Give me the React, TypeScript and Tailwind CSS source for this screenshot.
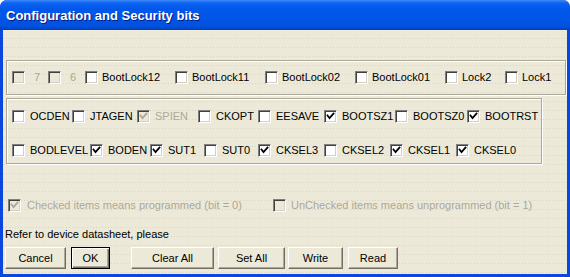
import React from "react";

type CB = { label: string; w?: number; checked?: boolean; disabled?: boolean; gap?: number };

function Check({ color }: { color: string }) {
  return (
    <svg width="9" height="9" viewBox="0 0 9 9" className="block">
      <path d="M1.5 3.5 L3.5 6 L7.5 1.5" fill="none" stroke={color} strokeWidth="1.8" strokeLinecap="square" />
    </svg>
  );
}

function Box({ checked, disabled }: { checked?: boolean; disabled?: boolean }) {
  return (
    <div
      className={
        "w-[13px] h-[13px] shrink-0 flex items-center justify-center border border-t-[#808080] border-l-[#808080] border-b-white border-r-white shadow-[inset_1px_1px_0_#404040,inset_-1px_-1px_0_#D4D0C8] " +
        (disabled ? "bg-[#ECE9D8]" : "bg-white")
      }
    >
      {checked && <Check color={disabled ? "#ACA899" : "#000"} />}
    </div>
  );
}

function CheckItem({ label, w, checked, disabled, gap = 5 }: CB) {
  return (
    <div className="flex items-center shrink-0" style={w ? { width: w } : undefined}>
      <Box checked={checked} disabled={disabled} />
      <span
        className={"leading-[13px] whitespace-nowrap " + (disabled ? "text-[#ACA899]" : "text-black")}
        style={{ marginLeft: gap }}
      >
        {label}
      </span>
    </div>
  );
}

function Btn({ label, w, ml, def }: { label: string; w: number; ml: number; def?: boolean }) {
  return (
    <div
      className={
        "h-[22px] flex items-center justify-center bg-[#ECE9D8] text-black " +
        (def
          ? "border border-black shadow-[inset_1px_1px_0_#fff,inset_-1px_-1px_0_#716F64,inset_-2px_-2px_0_#ACA899]"
          : "border border-t-white border-l-white border-b-[#716F64] border-r-[#716F64] shadow-[inset_-1px_-1px_0_#ACA899]")
      }
      style={{ width: w, marginLeft: ml }}
    >
      {label}
    </div>
  );
}

const etched = "border border-[#ACA899] shadow-[inset_1px_1px_0_#fff,1px_1px_0_#fff]";

export default function App() {
  return (
    <div
      className="w-[570px] h-[277px] flex flex-col bg-[#0B46DD] rounded-t-[7px] overflow-hidden text-[11px]"
      style={{ fontFamily: '"Liberation Sans", Arial, sans-serif' }}
    >
      <div className="h-[30px] shrink-0 flex items-center pl-[6px] bg-[linear-gradient(to_bottom,#3D8BF8_0px,#0E63F2_3px,#0058EA_9px,#0055E5_20px,#0052DE_26px,#0040C0_30px)]">
        <span className="text-white font-bold text-[13px] [text-shadow:1px_1px_0_#0A1883] leading-none pt-[1px]">
          Configuration and Security bits
        </span>
      </div>
      <div className="flex-1 mx-[3px] mb-[3px] flex flex-col bg-[#ECE9D8] bg-[linear-gradient(#ECE9D8_8px,transparent_8px),linear-gradient(90deg,#D9D5C6_1px,#ECE9D8_1px)] bg-[size:3px_9px] pt-[30px]">
        <div className={"ml-[3px] mr-[1px] h-[35px] flex items-center pl-[5px] " + etched}>
          <CheckItem label="7" w={36} disabled gap={9} />
          <CheckItem label="6" w={37} disabled gap={9} />
          <CheckItem label="BootLock12" w={90} gap={4} />
          <CheckItem label="BootLock11" w={90} gap={4} />
          <CheckItem label="BootLock02" w={90} gap={4} />
          <CheckItem label="BootLock01" w={90} gap={4} />
          <CheckItem label="Lock2" w={60} gap={4} />
          <CheckItem label="Lock1" gap={4} />
        </div>
        <div className={"ml-[3px] mt-[3px] w-[536px] h-[66px] flex flex-col pl-[5px] pt-[10px] " + etched}>
          <div className="h-[14px] flex items-center">
            <CheckItem label="OCDEN" w={60} />
            <CheckItem label="JTAGEN" w={65} />
            <CheckItem label="SPIEN" w={61} checked disabled />
            <CheckItem label="CKOPT" w={60} />
            <CheckItem label="EESAVE" w={66} />
            <CheckItem label="BOOTSZ1" w={71} checked />
            <CheckItem label="BOOTSZ0" w={72} />
            <CheckItem label="BOOTRST" checked />
          </div>
          <div className="h-[14px] mt-[20px] flex items-center">
            <CheckItem label="BODLEVEL" w={78} />
            <CheckItem label="BODEN" w={60} checked />
            <CheckItem label="SUT1" w={54} checked />
            <CheckItem label="SUT0" w={54} />
            <CheckItem label="CKSEL3" w={66} checked />
            <CheckItem label="CKSEL2" w={66} />
            <CheckItem label="CKSEL1" w={66} checked />
            <CheckItem label="CKSEL0" checked />
          </div>
        </div>
        <div className="mt-[35px] ml-[5px] h-[13px] flex items-center">
          <CheckItem label="Checked items means programmed (bit = 0)" w={265} checked disabled gap={6} />
          <CheckItem label="UnChecked items means unprogrammed (bit = 1)" disabled gap={5} />
        </div>
        <div className="mt-[16px] ml-[2px] leading-[13px] text-black">Refer to device datasheet, please</div>
        <div className="mt-[6px] flex">
          <Btn label="Cancel" w={61} ml={2} />
          <Btn label="OK" w={39} ml={5} def />
          <Btn label="Clear All" w={83} ml={21} />
          <Btn label="Set All" w={67} ml={4} />
          <Btn label="Write" w={55} ml={3} />
          <Btn label="Read" w={50} ml={5} />
        </div>
      </div>
    </div>
  );
}
